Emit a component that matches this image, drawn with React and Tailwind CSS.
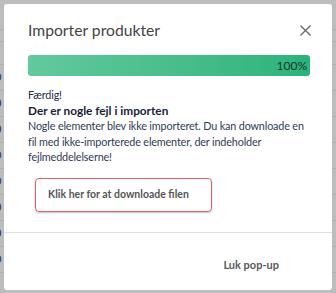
import React from "react";

export default function App() {
  return (
    <div className="relative w-[336px] h-[293px] overflow-hidden bg-[#bdbdbd]" style={{ fontFamily: 'Lato, "Liberation Sans", sans-serif' }}>
      {/* background table (dimmed) */}
      <div className="flex flex-col">
        <div className="h-[30px] border-b border-[#b0b0b0]" />
        <div className="h-[12px] border-b border-[#b0b0b0]" />
        <div className="h-[23px] border-b border-[#b0b0b0]" />
        {[0, 1, 2, 3, 4, 5, 6, 7].map((i) => (
          <div key={i} className="h-[26px] border-b border-[#b0b0b0] flex items-center">
            <span className="text-[11px] text-[#1d3150] ml-[-5px]">0</span>
          </div>
        ))}
        <div className="h-[32px] flex items-end text-[11px] text-[#2a2a2a]">
          <span className="ml-[-2px]">200,00</span>
          <span className="ml-[123px]">7.500,00 ¢</span>
        </div>
      </div>

      {/* modal */}
      <div className="absolute left-[4px] top-[4px] w-[328px] h-[286px] bg-white rounded-[3px] flex flex-col">
        <div className="flex items-center justify-between pl-6 pr-[21px] pt-[5px] h-[47px]">
          <h2 className="text-[15.7px] leading-[24px] text-[#444]">Importer produkter</h2>
          <svg width="11" height="11" viewBox="0 0 12 12">
            <path d="M1 1 L11 11 M11 1 L1 11" stroke="#6b6b6b" strokeWidth="1.5" strokeLinecap="round" />
          </svg>
        </div>
        <div className="pl-6 pr-[22px] pt-[4px]">
          <div className="h-[21px] rounded-[3px] bg-gradient-to-r from-[#62c99e] to-[#2ab37b] flex items-center justify-end pr-[3px]">
            <span className="text-[12px] text-[#12352a]">100%</span>
          </div>
          <div className="mt-[11px] text-[10.8px] leading-[15.5px] tracking-[-0.15px] whitespace-nowrap">
            <div className="text-[#1e2a47]">Færdig!</div>
            <div className="font-bold text-[11.8px] tracking-normal text-[#1a2238]">Der er nogle fejl i importen</div>
            <div className="text-[#2f3b55]">
              Nogle elementer blev ikke importeret. Du kan downloade en
              <br />
              fil med ikke-importerede elementer, der indeholder
              <br />
              fejlmeddelelserne!
            </div>
          </div>
          <button className="mt-[13px] ml-[7px] w-[177px] h-[34px] border border-[#e0605f] rounded-[4px] shadow-[0_1px_2px_rgba(0,0,0,0.25)] text-left pl-[12px] text-[10.5px] font-bold text-[#555] whitespace-nowrap">
            Klik her for at downloade filen
          </button>
        </div>
        <div className="mt-[20px] border-t border-[#dde1e6]" />
        <div className="flex justify-end pr-[53px] pt-[24px]">
          <span className="text-[11px] font-bold text-[#5a5a5a]">Luk pop-up</span>
        </div>
      </div>
    </div>
  );
}
